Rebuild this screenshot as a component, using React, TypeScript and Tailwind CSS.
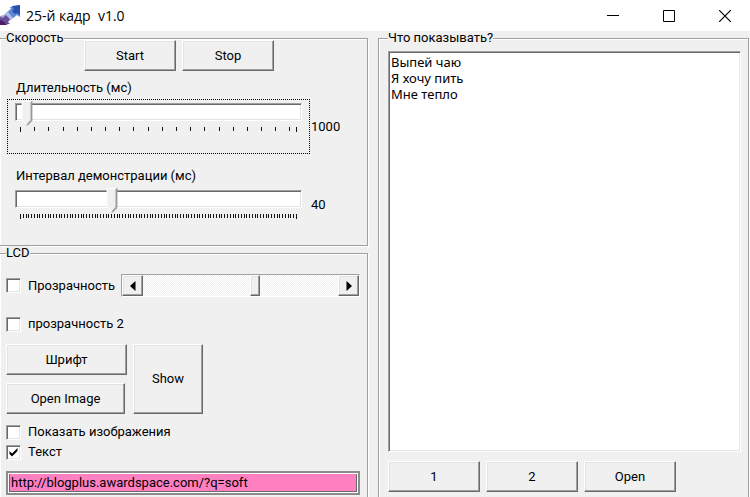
import { useState } from "react";
import type { ReactNode } from "react";
import clsx from "clsx";

const raised =
  "border border-t-white border-l-white border-r-[#696969] border-b-[#696969] bg-[#f0f0f0] shadow-[inset_-1px_-1px_0_#a0a0a0,inset_1px_1px_0_#e3e3e3]";
const sunken =
  "border border-t-[#a0a0a0] border-l-[#a0a0a0] border-r-white border-b-white shadow-[inset_1px_1px_0_#696969,inset_-1px_-1px_0_#e3e3e3]";

function Button({ children, className }: { children: ReactNode; className?: string }) {
  return (
    <button type="button" className={clsx(raised, "flex items-center justify-center", className)}>
      {children}
    </button>
  );
}

function Group({ title, className, children }: { title: string; className?: string; children: ReactNode }) {
  return (
    <fieldset
      className={clsx(
        "min-w-0 border border-[#a0a0a0] shadow-[inset_1px_1px_0_#fff,1px_1px_0_#fff]",
        className
      )}
    >
      <legend className="bg-[#f0f0f0] leading-[14px]">{title}</legend>
      {children}
    </fieldset>
  );
}

function Checkbox({ label, defaultChecked }: { label: string; defaultChecked?: boolean }) {
  return (
    <label className="flex items-center gap-[7px] leading-5">
      <span className="relative flex">
        <input
          type="checkbox"
          defaultChecked={defaultChecked}
          className={clsx(sunken, "peer size-[15px] appearance-none bg-white")}
        />
        <svg
          viewBox="0 0 15 15"
          className="pointer-events-none absolute inset-0 hidden size-[15px] peer-checked:block"
        >
          <path d="M3.5 6v3l2.5 2.5 5.5-5.5V3L6 8.500z" fill="#000" />
        </svg>
      </span>
      {label}
    </label>
  );
}

interface TrackBarProps {
  id: string;
  initial: number;
  ticks: number[];
}

function TrackBar({ id, initial, ticks }: TrackBarProps) {
  const [value, setValue] = useState(initial);

  return (
    <div>
      <div className={clsx(sunken, "relative h-[18px] bg-white")}>
        <input
          id={id}
          type="range"
          min={0}
          max={100}
          value={value}
          onChange={(e) => setValue(Number(e.target.value))}
          className="block h-full w-full appearance-none opacity-0"
        />
        <div className="pointer-events-none absolute inset-x-[6px] -top-[3px]">
          <svg
            viewBox="0 0 11 25"
            className="absolute h-[25px] w-[11px] -translate-x-1/2"
            style={{ left: `${value}%` }}
          >
            <path d="M0 0h11v19l-5 6h-1l-5-6z" fill="#f0f0f0" />
            <path d="M.5 19V.5H10M.5 19l5 5" fill="none" stroke="#fff" />
            <path d="M9.500 1v18l-4 4.500" fill="none" stroke="#a0a0a0" />
            <path d="M10.500 0v19.500l-5 5" fill="none" stroke="#696969" />
          </svg>
        </div>
      </div>
      <svg className="mt-[6px] block h-[5px] w-full" viewBox="0 0 287 5" preserveAspectRatio="none">
        {ticks.map((x, i) => (
          <path
            key={x}
            d={i === 0 || i === ticks.length - 1 ? `M${x + 0.5} 0v5` : `M${x + 0.5} 0v4`}
            stroke="#111"
            shapeRendering="crispEdges"
          />
        ))}
      </svg>
    </div>
  );
}

const coarseTicks = [...Array.from({ length: 20 }, (_, i) => Math.round(5 + i * 14.18)), 281];
const fineTicks = Array.from({ length: 101 }, (_, i) => Math.round(5 + i * 2.76));

function ScrollBar() {
  return (
    <div
      role="group"
      aria-label="Уровень прозрачности"
      className="flex h-[23px] flex-1 border border-t-[#a0a0a0] border-l-[#a0a0a0] border-r-white border-b-white bg-[repeating-conic-gradient(#fff_0_25%,#f0f0f0_0_50%)] bg-size-[2px_2px]"
    >
      <Button className="w-[21px]">
        <svg viewBox="0 0 6 10" className="h-[10px] w-[6px]" aria-label="Меньше">
          <path d="M5.500 0v10L0 5z" />
        </svg>
      </Button>
      <div className="flex flex-1">
        <div className="w-[55%]" />
        <div className={clsx(raised, "w-[10px]")} />
      </div>
      <Button className="w-[21px]">
        <svg viewBox="0 0 6 10" className="h-[10px] w-[6px]" aria-label="Больше">
          <path d="M.5 0v10L6 5z" />
        </svg>
      </Button>
    </div>
  );
}

function TitleBar() {
  return (
    <header className="flex h-[31px] items-center bg-white">
      <svg viewBox="0 0 20 20" className="-mt-[2px] h-5 w-5">
        <path d="M0 11l4-1 4-4 6 6-5 4-3 2 2 2H0z" fill="#a59fd0" />
        <path d="M0 12l3 1 3-3 4 4-2 3 2 2H0z" fill="#6a4c98" />
        <path d="M0 15l3 1 2 2 2 2H0z" fill="#4a1f68" />
        <path d="M5 9l5-5 6 6-5 5z" fill="#a9bfe8" />
        <path d="M8 7l3-3-1-2L20 0v12l-3-2-4 3z" fill="#5c88d6" />
        <path d="M12 1l8-1v10l-3-2-2 1-3-3 2-2z" fill="#2b4eae" />
      </svg>
      <h1 className="ml-[6px] flex-1 font-['Open_Sans',sans-serif] text-[14px] whitespace-pre">
        25-й кадр  v1.0
      </h1>
      <div className="flex h-full gap-[6px]">
        <button type="button" aria-label="Свернуть" className="flex w-[50px] items-center justify-center">
          <svg viewBox="0 0 12 12" className="size-3">
            <path d="M0 5.500h12" stroke="#000" />
          </svg>
        </button>
        <button type="button" aria-label="Развернуть" className="flex w-[50px] items-center justify-center">
          <svg viewBox="0 0 12 12" className="size-3">
            <path d="M.5.5h11v11H.5z" fill="none" stroke="#000" />
          </svg>
        </button>
        <button type="button" aria-label="Закрыть" className="flex w-[50px] items-center justify-center">
          <svg viewBox="0 0 12 12" className="size-3">
            <path d="M0 0l12 12M12 0L0 12" stroke="#000" strokeWidth="1.200" />
          </svg>
        </button>
      </div>
    </header>
  );
}

export default function App() {
  return (
    <div className="flex min-h-screen flex-col bg-[#f0f0f0] font-['Roboto','Liberation_Sans',sans-serif] text-[13px] leading-4 text-black">
      <TitleBar />
      <main className="grid flex-1 grid-cols-[368fr_371fr] gap-[10px] pr-px">
        <div className="flex flex-col">
          <Group title="Скорость" className="h-[215px] border-l-0 pl-[6px]">
            <div className="-mt-[5px] ml-[78px] flex gap-[6px]">
              <Button className="h-[31px] w-[92px]">Start</Button>
              <Button className="h-[31px] w-[92px]">Stop</Button>
            </div>
            <label htmlFor="duration" className="mt-[9px] ml-[10px] block">
              Длительность (мс)
            </label>
            <div className="mt-[3px] flex items-center">
              <div className="ml-px h-[55px] flex-1 border border-dotted border-black px-[7px] pt-[3px]">
                <TrackBar id="duration" initial={2} ticks={coarseTicks} />
              </div>
              <output htmlFor="duration" className="ml-px w-[56px]">1000</output>
            </div>
            <label htmlFor="interval" className="mt-[14px] ml-[10px] block">
              Интервал демонстрации (мс)
            </label>
            <div className="mt-[6px] flex">
              <div className="ml-[9px] flex-1">
                <TrackBar id="interval" initial={33} ticks={fineTicks} />
              </div>
              <output htmlFor="interval" className="mt-[7px] ml-[9px] w-[56px]">40</output>
            </div>
          </Group>

          <Group title="LCD" className="flex-1 border-b-0 border-l-0 pr-[7px] pl-[6px]">
            <div className="mt-[14px] flex items-center gap-[6px]">
              <Checkbox label="Прозрачность" />
              <ScrollBar />
            </div>
            <div className="mt-[17px]">
              <Checkbox label="прозрачность 2" />
            </div>
            <div className="mt-[10px] flex gap-[6px]">
              <div className="flex w-[121px] flex-col gap-[8px]">
                <Button className="h-[31px]">Шрифт</Button>
                <Button className="mr-[2px] h-[31px]">Open Image</Button>
              </div>
              <Button className="w-[70px]">Show</Button>
            </div>
            <div className="mt-[8px]">
              <Checkbox label="Показать изображения" />
              <Checkbox label="Текст" defaultChecked />
            </div>
            <div className="mt-[9px] border-2 border-[#8c8c8c] bg-white p-px">
              <input
                type="text"
                aria-label="Текст"
                defaultValue="http://blogplus.awardspace.com/?q=soft"
                className="block h-[18px] w-full border-r border-b border-l border-[#696969] bg-[#ff80c0] pl-px outline-none"
              />
            </div>
          </Group>
        </div>

        <Group title="Что показывать?" className="border-b-0 pr-[7px] pl-[9px]">
          <div className="flex h-full flex-col pt-[6px]">
            <textarea
              aria-label="Что показывать?"
              defaultValue={"Выпей чаю\nЯ хочу пить\nМне тепло"}
              className={clsx(
                sunken,
                "flex-1 resize-none bg-white px-[2px] pt-[2px] font-['Noto_Sans',sans-serif] text-[13px] leading-4 outline-none"
              )}
            />
            <div className="mt-[9px] mb-[5px] flex gap-[6px]">
              <Button className="h-[31px] w-[92px]">1</Button>
              <Button className="h-[31px] w-[92px]">2</Button>
              <Button className="h-[31px] w-[92px]">Open</Button>
            </div>
          </div>
        </Group>
      </main>
    </div>
  );
}
